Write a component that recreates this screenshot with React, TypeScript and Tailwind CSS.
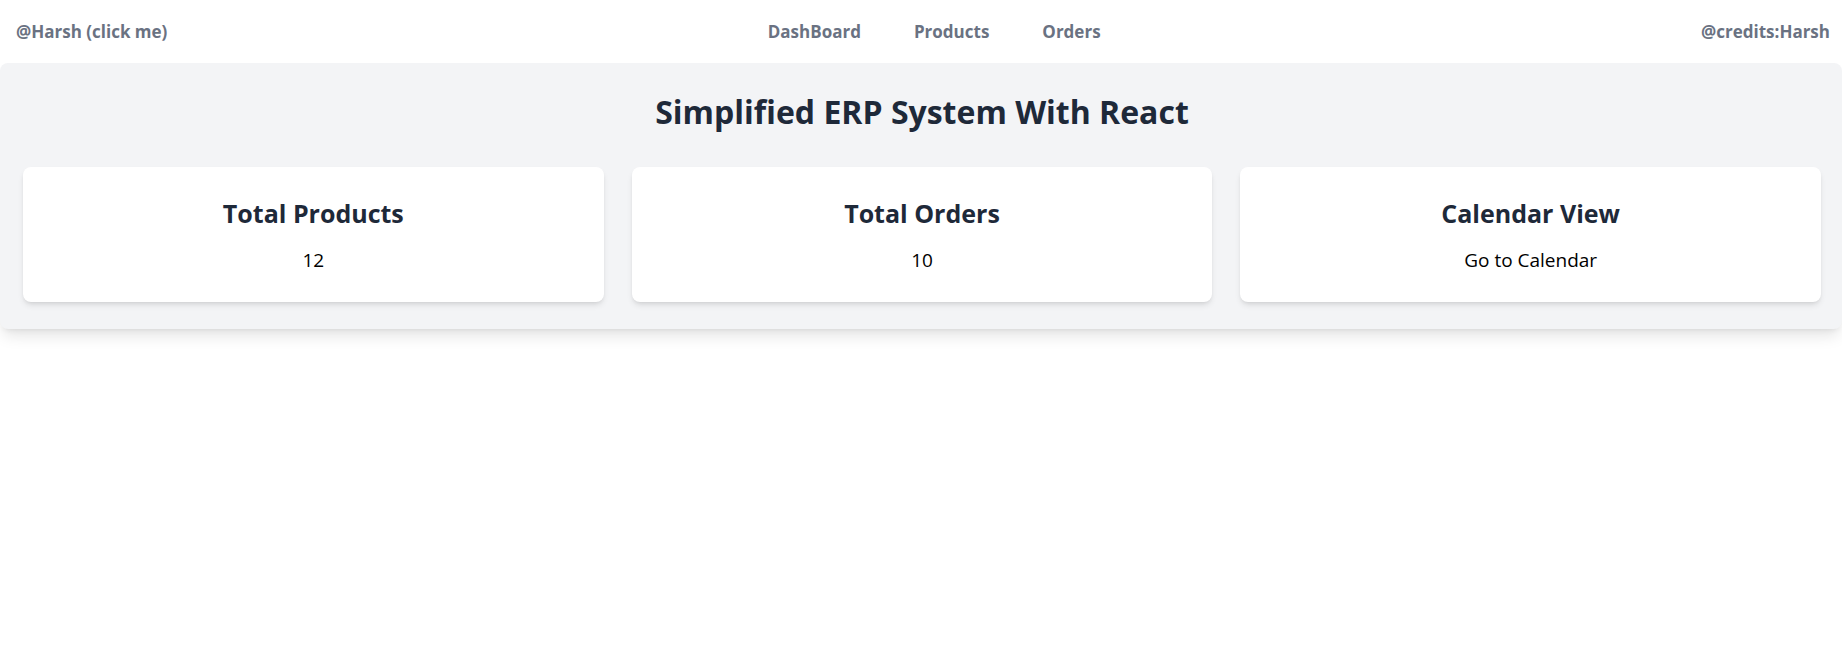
import React from "react";

const stats = [
  { title: "Total Products", value: "12" },
  { title: "Total Orders", value: "10" },
  { title: "Calendar View", value: "Go to Calendar" },
];

function StatCard({ title, value }: { title: string; value: string }) {
  return (
    <div className="bg-white rounded-lg shadow-md pt-[30px] pb-7 text-center">
      <h2 className="text-[25px] leading-8 font-bold text-gray-800 mb-[17px]">{title}</h2>
      <p className="text-[19px] leading-7 text-black">{value}</p>
    </div>
  );
}

export default function App() {
  return (
    <div className="min-h-screen bg-white font-['Open_Sans',sans-serif]">
      {/* Navbar */}
      <nav className="h-[63px] flex items-center justify-between pl-4 pr-3 text-[17px] leading-6 font-bold text-gray-500">
        <a href="#">@Harsh (click me)</a>
        <div className="flex gap-[53px]">
          <a href="#">DashBoard</a>
          <a href="#">Products</a>
          <a href="#">Orders</a>
        </div>
        <span>@credits:Harsh</span>
      </nav>

      {/* Dashboard */}
      <section className="bg-gray-100 rounded-lg shadow-lg pt-[31px] pl-[23px] pr-[21px] pb-[27px]">
        <h1 className="text-[32px] leading-9 font-bold text-gray-800 text-center mb-[37px]">
          Simplified ERP System With React
        </h1>
        <div className="grid grid-cols-3 gap-7">
          {stats.map((s) => (
            <StatCard key={s.title} title={s.title} value={s.value} />
          ))}
        </div>
      </section>
    </div>
  );
}
